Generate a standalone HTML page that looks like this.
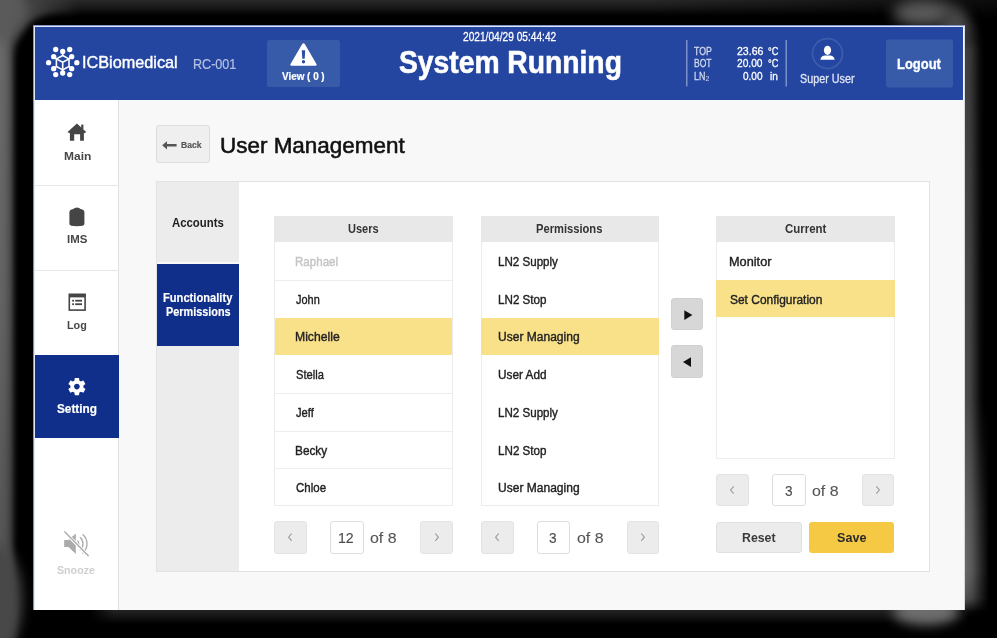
<!DOCTYPE html>
<html><head><meta charset="utf-8">
<style>
*{margin:0;padding:0;box-sizing:border-box}
html,body{width:997px;height:638px;overflow:hidden;background:#000;font-family:"Liberation Sans",sans-serif}
.a{position:absolute}
.t{position:absolute;white-space:nowrap}
svg{position:absolute;overflow:visible}
#screen{position:absolute;left:33px;top:25px;width:932px;height:585px;background:#f8f8f8;border:1px solid #8193c6;border-right-color:#d8d8dc;border-bottom:0;box-shadow:inset 1px 1px 0 #e3e8f5;overflow:hidden}
#hdr{position:absolute;left:35px;top:27px;width:928px;height:73px;background:#2446a0}
#side{position:absolute;left:35px;top:100px;width:84px;height:510px;background:#fff;border-right:1px solid #dfdfe6}
.dv{position:absolute;left:35px;width:84px;height:1px;background:#e6e6e6}
.card{position:absolute;left:156px;top:181px;width:774px;height:391px;background:#fff;border:1px solid #e2e2e2}
.list{position:absolute;background:#fff;border:1px solid #ececec}
.lh{position:absolute;background:#e8e8e8}
.sel{position:absolute;background:#f9e18a}
.rd{position:absolute;height:1px;background:#ededed}
.pbtn{position:absolute;width:32.5px;height:32.5px;background:#ececec;border:1px solid #e3e3e3;border-radius:3px}
.pin{position:absolute;width:33.5px;height:32.5px;background:#fff;border:1px solid #dedede;border-radius:3px}
</style></head><body>
<div id="frame" style="position:absolute;left:0;top:0;width:997px;height:638px;overflow:hidden;background:#000">
  <div class="a" style="left:0;top:0;width:60px;height:638px;background:linear-gradient(to right,#6a6a6a 0,#636363 5px,#505050 10px,#262626 15px,#000 20px);-webkit-mask-image:linear-gradient(to bottom,#000 0,rgba(0,0,0,.95) 300px,rgba(0,0,0,.8) 560px,rgba(0,0,0,.6) 638px)"></div>
  <div class="a" style="left:0;top:0;width:997px;height:40px;mix-blend-mode:lighten;background:linear-gradient(to bottom,#282828 0,#1e1e1e 5px,#000 19px);-webkit-mask-image:linear-gradient(to right,#000 0,#000 650px,rgba(0,0,0,.55) 860px,rgba(0,0,0,.3) 997px)"></div>
  <div class="a" style="left:0;top:0;width:120px;height:90px;mix-blend-mode:lighten;background:radial-gradient(ellipse 70px 50px at 10px 10px,#5a5a5a 0,#444 30%,rgba(0,0,0,0) 100%)"></div>
  <div class="a" style="left:16px;top:14px;width:969px;height:611px;background:#000;border-radius:40px;filter:blur(3px)"></div>
  <div class="a" style="left:90px;top:610px;width:880px;height:16px;background:linear-gradient(to bottom,#232323 0,#1a1a1a 4px,#000 14px);-webkit-mask-image:linear-gradient(to right,rgba(0,0,0,0) 0,#000 24px,#000 856px,rgba(0,0,0,0) 880px)"></div>
  <div class="a" style="left:-22px;top:-22px;width:46px;height:64px;border-radius:50%;background:#5a5a5a;filter:blur(6px)"></div>
  <div class="a" style="left:-30px;top:545px;width:52px;height:110px;border-radius:50%;background:#484848;filter:blur(6px)"></div>
  <div class="a" style="left:965px;top:20px;width:24px;height:600px;background:linear-gradient(to right,#505050 0,#474747 5px,#2a2a2a 10px,#0c0c0c 15px,#000 19px);-webkit-mask-image:linear-gradient(to bottom,rgba(0,0,0,0) 0,rgba(0,0,0,.8) 30px,rgba(0,0,0,.95) 300px,#000 540px,rgba(0,0,0,0) 598px)"></div>
  <div class="a" style="left:893px;top:0px;width:62px;height:26px;border-radius:50%;background:#5a5a5a;filter:blur(7px)"></div>
  <div class="a" style="left:940px;top:8px;width:30px;height:36px;border-radius:50%;background:#474747;filter:blur(6px)"></div>
  <div class="a" style="left:893px;top:599px;width:66px;height:26px;border-radius:50%;background:#6e6e6e;filter:blur(6px)"></div>
  <div class="a" style="left:965px;top:400px;width:26px;height:212px;mix-blend-mode:lighten;background:linear-gradient(to right,#6a6a6a 0,#585858 7px,#2e2e2e 15px,#000 24px);-webkit-mask-image:linear-gradient(to bottom,rgba(0,0,0,0) 0,rgba(0,0,0,.8) 110px,#000 170px,rgba(0,0,0,.7) 198px,rgba(0,0,0,0) 212px)"></div>
  
  
</div>
<div id="screen"></div>
<div id="hdr"></div>
<!-- header items -->
<svg style="left:0;top:0" width="997" height="100" viewBox="0 0 997 100">
  <g transform="translate(62.7 62.7)" fill="#fff" stroke="none">
    <circle cx="0" cy="-11.3" r="2.65"/>
    <circle cx="-7" cy="-13.2" r="2.65"/><circle cx="7" cy="-13.2" r="2.65"/>
    <circle cx="-9" cy="-6" r="2.65"/><circle cx="9" cy="-6" r="2.65"/>
    <circle cx="-14.1" cy="0" r="2.65"/><circle cx="14.1" cy="0" r="2.65"/>
    <circle cx="-9" cy="6" r="2.65"/><circle cx="9" cy="6" r="2.65"/>
    <circle cx="0" cy="10.3" r="2.65"/>
    <circle cx="-7" cy="11.9" r="2.65"/><circle cx="7" cy="11.9" r="2.65"/>
    <g fill="none" stroke="#fff" stroke-width="1.6" stroke-linejoin="round">
      <path d="M0 -7.2 L6.3 -3.8 L6.3 3.8 L0 7.2 L-6.3 3.8 L-6.3 -3.8 Z"/>
      <path d="M-6.3 -3.8 L0 -0.4 L6.3 -3.8 M0 -0.4 L0 7.2"/>
      <path d="M0 -11.3 L0 -7.2 M-9 -6 L-6.3 -3.8 M9 -6 L6.3 -3.8 M-9 6 L-6.3 3.8 M9 6 L6.3 3.8 M0 10.3 L0 7.2"/>
    </g>
  </g>
  <rect x="267" y="40" width="73" height="47" rx="2.5" fill="#375ba8"/>
  <path d="M303.5 43.3 Q304.4 43.3 304.9 44.2 L316.6 64.2 Q317.2 65.6 315.6 65.8 L291.4 65.8 Q289.8 65.6 290.4 64.2 L302.1 44.2 Q302.6 43.3 303.5 43.3 Z" fill="#fff"/>
  <path d="M301.8 50.2 L305.2 50.2 L304.7 58.8 L302.3 58.8 Z" fill="#2d4ea6"/>
  <circle cx="303.5" cy="61.7" r="1.7" fill="#2d4ea6"/>
  <rect x="686" y="40" width="1.5" height="46.5" fill="#7b90c8"/>
  <rect x="785.5" y="40" width="1.5" height="46.5" fill="#7b90c8"/>
  <circle cx="827.5" cy="53.6" r="15" fill="none" stroke="#3d5dac" stroke-width="1.7"/>
  <ellipse cx="827.5" cy="50.3" rx="3.6" ry="4.6" fill="#fff"/>
  <path d="M820.4 59.8 Q820.6 56.4 824.5 55.6 L830.5 55.6 Q834.4 56.4 834.6 59.8 Z" fill="#fff"/>
  <rect x="886" y="39.5" width="67" height="48" rx="2.5" fill="#375ba8"/>
</svg>
<div class="t" style="left:705.6px;top:75.2px;font-size:7px;line-height:7px;color:#d4dbee">2</div>

<div id="side"></div>
<div class="dv" style="top:185px"></div>
<div class="dv" style="top:270px"></div>
<div class="a" style="left:35px;top:355px;width:84px;height:83px;background:#0f2f8b"></div>
<svg style="left:0;top:0" width="120" height="600" viewBox="0 0 120 600">
  <!-- home -->
  <path d="M76.9 123.6 L86.2 132 L84.6 133.3 L83.9 132.7 L83.9 140.8 L80.1 140.8 L80.1 134.3 L74.2 134.3 L74.2 140.8 L69.9 140.8 L69.9 132.7 L69.2 133.3 L67.6 132 Z" fill="#454545"/>
  <rect x="81.2" y="124.6" width="2.2" height="4.5" fill="#454545"/>
  <!-- IMS -->
  <path d="M69.4 212.2 Q69.5 209.6 73.2 209 Q74.6 207.6 76.9 207.5 Q79.2 207.6 80.6 209 Q84.3 209.6 84.4 212.2 L84.4 224 Q84.3 226.2 76.9 226.2 Q69.5 226.2 69.4 224 Z" fill="#454545"/>
  <!-- log -->
  <rect x="69.3" y="294.3" width="15.8" height="15.8" fill="none" stroke="#454545" stroke-width="1.6"/>
  <rect x="69" y="294" width="16.4" height="3.4" fill="#454545"/>
  <rect x="72.2" y="299.8" width="1.8" height="1.8" fill="#454545"/><rect x="75.2" y="299.8" width="6.8" height="1.8" fill="#454545"/>
  <rect x="72.2" y="303.3" width="1.8" height="1.8" fill="#454545"/><rect x="75.2" y="303.3" width="6.8" height="1.8" fill="#454545"/>
  <!-- gear -->
  <path fill="#fff" fill-rule="evenodd" transform="translate(76.9 386.6) scale(0.9) translate(-12 -12)" d="M19.14 12.94c.04-.3.06-.61.06-.94 0-.32-.02-.64-.07-.94l2.03-1.580c.18-.14.23-.41.12-.61l-1.92-3.32c-.12-.22-.37-.29-.59-.22l-2.39.96c-.5-.38-1.03-.7-1.62-.94l-.36-2.54c-.04-.24-.24-.41-.48-.41h-3.84c-.24 0-.43.17-.47.41l-.36 2.54c-.59.24-1.130.57-1.62.94l-2.39-.96c-.22-.08-.47 0-.59.22L2.74 8.87c-.12.21-.08.47.12.61l2.03 1.58c-.05.3-.09.63-.09.94s.02.64.07.94l-2.03 1.58c-.18.14-.23.41-.12.61l1.92 3.32c.12.22.37.29.59.22l2.39-.96c.5.38 1.03.7 1.62.94l.36 2.54c.05.24.24.41.48.41h3.84c.24 0 .44-.17.47-.41l.36-2.54c.59-.24 1.13-.56 1.62-.94l2.39.96c.22.08.47 0 .59-.22l1.92-3.32c.12-.22.07-.47-.12-.61l-2.010-1.58zM12 15.2c-1.77 0-3.2-1.43-3.2-3.2s1.43-3.2 3.2-3.2 3.2 1.43 3.2 3.2-1.43 3.2-3.2 3.2z"/>
  <!-- snooze -->
  <path d="M64.2 539.9 L68.5 539.9 L75.8 533.6 L75.8 554 L68.5 547.1 L64.2 547.1 Z" fill="#ababab"/>
  <g fill="none" stroke="#ababab" stroke-width="1.3">
    <path d="M77.54 540.76 A4.3 4.3 0 0 1 77.54 546.84"/>
    <path d="M79.96 537.29 A8.5 8.5 0 0 1 79.96 550.31"/>
    <path d="M82.53 534.22 A12.5 12.5 0 0 1 82.53 553.38"/>
  </g>
  <path d="M63.6 531 L89.2 556.6" stroke="#fff" stroke-width="3.2"/>
  <path d="M64.4 531.4 L88.6 555.9" stroke="#ababab" stroke-width="1.4"/>
</svg>

<div class="a" style="left:120px;top:100px;width:843px;height:510px;background:#f8f8f8"></div>
<!-- back button -->
<div class="a" style="left:156px;top:125px;width:53.5px;height:38px;background:#efefef;border:1px solid #dddddd;border-radius:3px"></div>
<svg style="left:0;top:0" width="300" height="200" viewBox="0 0 300 200">
  <path d="M162.2 145.3 L167 141.2 L167 144.1 L176.6 144.1 L176.6 146.5 L167 146.5 L167 149.4 Z" fill="#555"/>
</svg>

<div class="card"></div>
<div class="a" style="left:157px;top:182px;width:82px;height:389px;background:#ececec"></div>
<div class="a" style="left:157px;top:262px;width:82px;height:1.5px;background:#f8f8f8"></div>
<div class="a" style="left:157px;top:263.5px;width:82px;height:82px;background:#0f2f8b"></div>

<!-- lists -->
<div class="list" style="left:274px;top:216px;width:179px;height:290px"></div>
<div class="lh" style="left:274px;top:216px;width:179px;height:26px"></div>
<div class="sel" style="left:275px;top:317.5px;width:177px;height:37.7px"></div>
<div class="rd" style="left:275px;top:279.7px;width:177px"></div>
<div class="rd" style="left:275px;top:392.8px;width:177px"></div>
<div class="rd" style="left:275px;top:430.5px;width:177px"></div>
<div class="rd" style="left:275px;top:468.2px;width:177px"></div>

<div class="list" style="left:481px;top:216px;width:178px;height:290px"></div>
<div class="lh" style="left:481px;top:216px;width:178px;height:26px"></div>
<div class="sel" style="left:481px;top:317.5px;width:178px;height:37.9px"></div>

<div class="list" style="left:716px;top:216px;width:179px;height:243px"></div>
<div class="lh" style="left:716px;top:216px;width:179px;height:26px"></div>
<div class="sel" style="left:716px;top:279.7px;width:179px;height:37.6px"></div>

<!-- arrows -->
<div class="a" style="left:671px;top:298px;width:32px;height:32px;background:#d7d7d7;border:1px solid #d0d0d0;border-radius:3px"></div>
<div class="a" style="left:671px;top:345px;width:32px;height:32.5px;background:#d7d7d7;border:1px solid #d0d0d0;border-radius:3px"></div>

<!-- pagination -->
<div class="pbtn" style="left:274px;top:521px"></div>
<div class="pin" style="left:330px;top:521px"></div>
<div class="pbtn" style="left:420px;top:521px"></div>
<div class="pbtn" style="left:481px;top:521px"></div>
<div class="pin" style="left:536.5px;top:521px"></div>
<div class="pbtn" style="left:626.5px;top:521px"></div>
<div class="pbtn" style="left:716px;top:473.6px"></div>
<div class="pin" style="left:772px;top:473.6px"></div>
<div class="pbtn" style="left:861.5px;top:473.6px"></div>
<div class="a" style="left:716px;top:521.5px;width:86px;height:31.5px;background:#ececec;border:1px solid #e0e0e0;border-radius:3px"></div>
<div class="a" style="left:808.5px;top:521.5px;width:85.5px;height:31.5px;background:#f6c945;border-radius:3px"></div>

<svg style="left:0;top:0" width="997" height="638" viewBox="0 0 997 638">
  <path d="M684.3 310.2 L692.4 315.1 L684.3 320 Z" fill="#111"/>
  <path d="M691 357.2 L683 362.1 L691 367 Z" fill="#111"/>
  <g fill="none" stroke="#9a9a9a" stroke-width="1.1">
    <path d="M291.7 533.5 L288.6 537.2 L291.7 540.9"/>
    <path d="M435.3 533.5 L438.4 537.2 L435.3 540.9"/>
    <path d="M498.7 533.5 L495.6 537.2 L498.7 540.9"/>
    <path d="M641.3 533.5 L644.4 537.2 L641.3 540.9"/>
    <path d="M733.7 486.3 L730.6 490 L733.7 493.7"/>
    <path d="M876.3 486.3 L879.4 490 L876.3 493.7"/>
  </g>
</svg>

<div class="t" style="left:82.45px;top:53.98px;font-size:17.15px;line-height:17.15px;font-weight:normal;color:#ffffff;transform:scaleX(0.9479);transform-origin:0 0;-webkit-text-stroke:0.4px #ffffff;">ICBiomedical</div>
<div class="t" style="left:193.01px;top:56.56px;font-size:14.1px;line-height:14.1px;font-weight:normal;color:#b4c0e2;transform:scaleX(0.8926);transform-origin:0 0;-webkit-text-stroke:0.2px #b4c0e2;">RC-001</div>
<div class="t" style="left:282.00px;top:71.27px;font-size:10.9px;line-height:10.9px;font-weight:bold;color:#ffffff;transform:scaleX(0.9075);transform-origin:0 0;-webkit-text-stroke:0.2px #ffffff;">View ( 0 )</div>
<div class="t" style="left:463.00px;top:30.43px;font-size:13.08px;line-height:13.08px;font-weight:normal;color:#ffffff;transform:scaleX(0.7768);transform-origin:0 0;-webkit-text-stroke:0.3px #ffffff;">2021/04/29 05:44:42</div>
<div class="t" style="left:399.00px;top:47.04px;font-size:31.25px;line-height:31.25px;font-weight:bold;color:#ffffff;transform:scaleX(0.9040);transform-origin:0 0;-webkit-text-stroke:0.6px #ffffff;">System Running</div>
<div class="t" style="left:694.00px;top:45.05px;font-size:11.63px;line-height:11.63px;font-weight:normal;color:#d4dbee;transform:scaleX(0.7521);transform-origin:0 0;-webkit-text-stroke:0.3px #d4dbee;">TOP</div>
<div class="t" style="left:694.00px;top:57.25px;font-size:11.63px;line-height:11.63px;font-weight:normal;color:#d4dbee;transform:scaleX(0.7354);transform-origin:0 0;-webkit-text-stroke:0.3px #d4dbee;">BOT</div>
<div class="t" style="left:694.00px;top:70.25px;font-size:11.63px;line-height:11.63px;font-weight:normal;color:#d4dbee;transform:scaleX(0.7604);transform-origin:0 0;-webkit-text-stroke:0.3px #d4dbee;">LN</div>
<div class="t" style="left:737.00px;top:45.05px;font-size:11.63px;line-height:11.63px;font-weight:normal;color:#ffffff;transform:scaleX(0.9083);transform-origin:0 0;-webkit-text-stroke:0.3px #ffffff;">23.66</div>
<div class="t" style="left:737.00px;top:57.25px;font-size:11.63px;line-height:11.63px;font-weight:normal;color:#ffffff;transform:scaleX(0.8776);transform-origin:0 0;-webkit-text-stroke:0.3px #ffffff;">20.00</div>
<div class="t" style="left:743.00px;top:70.25px;font-size:11.63px;line-height:11.63px;font-weight:normal;color:#ffffff;transform:scaleX(0.8635);transform-origin:0 0;-webkit-text-stroke:0.3px #ffffff;">0.00</div>
<div class="t" style="left:768.00px;top:45.05px;font-size:11.63px;line-height:11.63px;font-weight:normal;color:#ffffff;transform:scaleX(0.7906);transform-origin:0 0;-webkit-text-stroke:0.3px #ffffff;">°C</div>
<div class="t" style="left:768.00px;top:57.25px;font-size:11.63px;line-height:11.63px;font-weight:normal;color:#ffffff;transform:scaleX(0.7906);transform-origin:0 0;-webkit-text-stroke:0.3px #ffffff;">°C</div>
<div class="t" style="left:770.00px;top:70.25px;font-size:11.63px;line-height:11.63px;font-weight:normal;color:#ffffff;transform:scaleX(0.8739);transform-origin:0 0;-webkit-text-stroke:0.3px #ffffff;">in</div>
<div class="t" style="left:800.00px;top:72.43px;font-size:13.08px;line-height:13.08px;font-weight:normal;color:#dfe5f5;transform:scaleX(0.8235);transform-origin:0 0;-webkit-text-stroke:0.3px #dfe5f5;">Super User</div>
<div class="t" style="left:897.00px;top:57.00px;font-size:14.53px;line-height:14.53px;font-weight:bold;color:#ffffff;transform:scaleX(0.8919);transform-origin:0 0;-webkit-text-stroke:0.3px #ffffff;">Logout</div>
<div class="t" style="left:63.60px;top:150.15px;font-size:11.63px;line-height:11.63px;font-weight:bold;color:#474747;transform:scaleX(1.0311);transform-origin:0 0;">Main</div>
<div class="t" style="left:66.60px;top:234.40px;font-size:11.34px;line-height:11.34px;font-weight:bold;color:#474747;transform:scaleX(1.0105);transform-origin:0 0;">IMS</div>
<div class="t" style="left:67.00px;top:319.15px;font-size:11.63px;line-height:11.63px;font-weight:bold;color:#474747;transform:scaleX(0.9292);transform-origin:0 0;">Log</div>
<div class="t" style="left:57.00px;top:404.41px;font-size:11.92px;line-height:11.92px;font-weight:bold;color:#ffffff;transform:scaleX(0.9882);transform-origin:0 0;-webkit-text-stroke:0.2px #ffffff;">Setting</div>
<div class="t" style="left:57.40px;top:564.15px;font-size:11.63px;line-height:11.63px;font-weight:bold;color:#cfcfcf;transform:scaleX(0.9171);transform-origin:0 0;">Snooze</div>
<div class="t" style="left:180.90px;top:140.13px;font-size:9.88px;line-height:9.88px;font-weight:bold;color:#555555;transform:scaleX(0.8667);transform-origin:0 0;-webkit-text-stroke:0.2px #555555;">Back</div>
<div class="t" style="left:219.52px;top:134.45px;font-size:22.97px;line-height:22.97px;font-weight:normal;color:#111111;transform:scaleX(0.9774);transform-origin:0 0;-webkit-text-stroke:0.55px #111111;">User Management</div>
<div class="t" style="left:172.00px;top:217.09px;font-size:12.65px;line-height:12.65px;font-weight:bold;color:#1e1e1e;transform:scaleX(0.8982);transform-origin:0 0;">Accounts</div>
<div class="t" style="left:163.30px;top:293.31px;font-size:11.92px;line-height:11.92px;font-weight:bold;color:#ffffff;transform:scaleX(0.9361);transform-origin:0 0;-webkit-text-stroke:0.15px #ffffff;">Functionality</div>
<div class="t" style="left:165.70px;top:307.11px;font-size:11.92px;line-height:11.92px;font-weight:bold;color:#ffffff;transform:scaleX(0.9131);transform-origin:0 0;-webkit-text-stroke:0.15px #ffffff;">Permissions</div>
<div class="t" style="left:347.70px;top:223.49px;font-size:12.65px;line-height:12.65px;font-weight:bold;color:#333333;transform:scaleX(0.8716);transform-origin:0 0;">Users</div>
<div class="t" style="left:535.70px;top:223.49px;font-size:12.65px;line-height:12.65px;font-weight:bold;color:#333333;transform:scaleX(0.8823);transform-origin:0 0;">Permissions</div>
<div class="t" style="left:784.50px;top:223.49px;font-size:12.65px;line-height:12.65px;font-weight:bold;color:#333333;transform:scaleX(0.9044);transform-origin:0 0;">Current</div>
<div class="t" style="left:294.82px;top:255.03px;font-size:13.08px;line-height:13.08px;font-weight:normal;color:#c4c4c4;transform:scaleX(0.8847);transform-origin:0 0;-webkit-text-stroke:0.4px #c4c4c4;">Raphael</div>
<div class="t" style="left:295.70px;top:292.73px;font-size:13.08px;line-height:13.08px;font-weight:normal;color:#222222;transform:scaleX(0.8367);transform-origin:0 0;-webkit-text-stroke:0.4px #222222;">John</div>
<div class="t" style="left:294.77px;top:330.43px;font-size:13.08px;line-height:13.08px;font-weight:normal;color:#222222;transform:scaleX(0.9315);transform-origin:0 0;-webkit-text-stroke:0.4px #222222;">Michelle</div>
<div class="t" style="left:295.70px;top:368.13px;font-size:13.08px;line-height:13.08px;font-weight:normal;color:#222222;transform:scaleX(0.8522);transform-origin:0 0;-webkit-text-stroke:0.4px #222222;">Stella</div>
<div class="t" style="left:295.70px;top:405.83px;font-size:13.08px;line-height:13.08px;font-weight:normal;color:#222222;transform:scaleX(0.8534);transform-origin:0 0;-webkit-text-stroke:0.4px #222222;">Jeff</div>
<div class="t" style="left:294.80px;top:443.53px;font-size:13.08px;line-height:13.08px;font-weight:normal;color:#222222;transform:scaleX(0.9038);transform-origin:0 0;-webkit-text-stroke:0.4px #222222;">Becky</div>
<div class="t" style="left:295.70px;top:481.23px;font-size:13.08px;line-height:13.08px;font-weight:normal;color:#222222;transform:scaleX(0.8791);transform-origin:0 0;-webkit-text-stroke:0.4px #222222;">Chloe</div>
<div class="t" style="left:498.11px;top:255.03px;font-size:13.08px;line-height:13.08px;font-weight:normal;color:#222222;transform:scaleX(0.8856);transform-origin:0 0;-webkit-text-stroke:0.4px #222222;">LN2 Supply</div>
<div class="t" style="left:498.11px;top:292.73px;font-size:13.08px;line-height:13.08px;font-weight:normal;color:#222222;transform:scaleX(0.8901);transform-origin:0 0;-webkit-text-stroke:0.4px #222222;">LN2 Stop</div>
<div class="t" style="left:498.08px;top:330.43px;font-size:13.08px;line-height:13.08px;font-weight:normal;color:#222222;transform:scaleX(0.9198);transform-origin:0 0;-webkit-text-stroke:0.4px #222222;">User Managing</div>
<div class="t" style="left:498.10px;top:368.13px;font-size:13.08px;line-height:13.08px;font-weight:normal;color:#222222;transform:scaleX(0.9015);transform-origin:0 0;-webkit-text-stroke:0.4px #222222;">User Add</div>
<div class="t" style="left:498.11px;top:405.83px;font-size:13.08px;line-height:13.08px;font-weight:normal;color:#222222;transform:scaleX(0.8856);transform-origin:0 0;-webkit-text-stroke:0.4px #222222;">LN2 Supply</div>
<div class="t" style="left:498.11px;top:443.53px;font-size:13.08px;line-height:13.08px;font-weight:normal;color:#222222;transform:scaleX(0.8901);transform-origin:0 0;-webkit-text-stroke:0.4px #222222;">LN2 Stop</div>
<div class="t" style="left:498.08px;top:481.23px;font-size:13.08px;line-height:13.08px;font-weight:normal;color:#222222;transform:scaleX(0.9198);transform-origin:0 0;-webkit-text-stroke:0.4px #222222;">User Managing</div>
<div class="t" style="left:729.43px;top:255.03px;font-size:13.08px;line-height:13.08px;font-weight:normal;color:#222222;transform:scaleX(0.9733);transform-origin:0 0;-webkit-text-stroke:0.4px #222222;">Monitor</div>
<div class="t" style="left:730.40px;top:292.73px;font-size:13.08px;line-height:13.08px;font-weight:normal;color:#222222;transform:scaleX(0.9139);transform-origin:0 0;-webkit-text-stroke:0.4px #222222;">Set Configuration</div>
<div class="t" style="left:338.22px;top:531.20px;font-size:14.53px;line-height:14.53px;font-weight:normal;color:#4a4a4a;transform:scaleX(0.9753);transform-origin:0 0;-webkit-text-stroke:0.1px #4a4a4a;">12</div>
<div class="t" style="left:370.30px;top:531.20px;font-size:14.53px;line-height:14.53px;font-weight:normal;color:#555555;transform:scaleX(1.0978);transform-origin:0 0;-webkit-text-stroke:0.1px #555555;">of 8</div>
<div class="t" style="left:548.50px;top:531.20px;font-size:14.53px;line-height:14.53px;font-weight:normal;color:#4a4a4a;transform:scaleX(0.9375);transform-origin:0 0;-webkit-text-stroke:0.1px #4a4a4a;">3</div>
<div class="t" style="left:577.00px;top:531.20px;font-size:14.53px;line-height:14.53px;font-weight:normal;color:#555555;transform:scaleX(1.0978);transform-origin:0 0;-webkit-text-stroke:0.1px #555555;">of 8</div>
<div class="t" style="left:784.50px;top:484.20px;font-size:14.53px;line-height:14.53px;font-weight:normal;color:#4a4a4a;transform:scaleX(0.9375);transform-origin:0 0;-webkit-text-stroke:0.1px #4a4a4a;">3</div>
<div class="t" style="left:812.00px;top:484.20px;font-size:14.53px;line-height:14.53px;font-weight:normal;color:#555555;transform:scaleX(1.0978);transform-origin:0 0;-webkit-text-stroke:0.1px #555555;">of 8</div>
<div class="t" style="left:741.50px;top:531.18px;font-size:13.37px;line-height:13.37px;font-weight:bold;color:#3a3a3a;transform:scaleX(0.9205);transform-origin:0 0;">Reset</div>
<div class="t" style="left:836.50px;top:531.18px;font-size:13.37px;line-height:13.37px;font-weight:bold;color:#2a2a2a;transform:scaleX(0.9425);transform-origin:0 0;">Save</div>
</body></html>
